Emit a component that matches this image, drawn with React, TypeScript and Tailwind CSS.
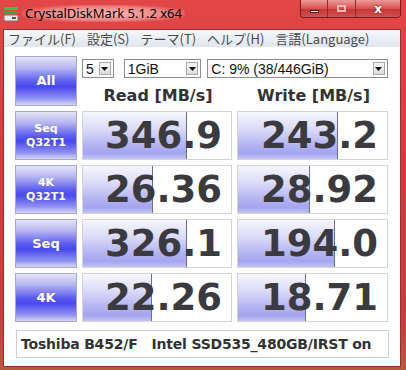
import React from "react";

type Row = { label: string[]; read: string; write: string; rw: number; ww: number };

const rows: Row[] = [
  { label: ["Seq", "Q32T1"], read: "346.9", write: "243.2", rw: 104, ww: 100 },
  { label: ["4K", "Q32T1"], read: "26.36", write: "28.92", rw: 70, ww: 72 },
  { label: ["Seq"], read: "326.1", write: "194.0", rw: 104, ww: 97 },
  { label: ["4K"], read: "22.26", write: "18.71", rw: 69, ww: 68 },
];

const menu = ["ファイル(F)", "設定(S)", "テーマ(T)", "ヘルプ(H)", "言語(Language)"];

const btnGrad =
  "bg-[linear-gradient(to_bottom,#e4e4f6_0%,#b8b8f2_22%,#5e5ef0_50%,#4848ee_62%,#8e8ef2_86%,#d6d6f6_100%)]";

function SideButton({ label, tall }: { label: string[]; tall?: boolean }) {
  const two = label.length > 1;
  return (
    <div
      className={`flex flex-col items-center justify-center border border-[#a8a8cc] ${btnGrad} font-['DejaVu_Sans',sans-serif] font-bold text-white ${
        tall ? "h-[50px]" : "h-[49px]"
      } ${two ? "text-[11px] leading-[14px]" : "text-[13px]"}`}
    >
      {label.map((l) => (
        <span key={l}>{l}</span>
      ))}
    </div>
  );
}

function Meter({ value, bar }: { value: string; bar: number }) {
  return (
    <div className="relative flex h-[49px] items-center justify-end overflow-hidden border border-[#d4d4d4] bg-white pr-[9px]">
      <div
        className="absolute inset-y-0 left-0 border-r border-[#6c6c98] bg-[linear-gradient(to_bottom,#f6f6fd_0%,#dcdcf8_35%,#b4b4f3_70%,#a4a4f0_88%,#c4c4f5_100%)]"
        style={{ width: bar }}
      />
      <span className="relative font-['DejaVu_Sans',sans-serif] text-[37px] font-bold leading-none text-[#3b3b3f]">
        {value}
      </span>
    </div>
  );
}

function Combo({ text, w }: { text: string; w: string }) {
  return (
    <div className={`flex h-[19px] items-center justify-between border border-[#8e8e8e] bg-white pl-[3px] pr-[2px] ${w}`}>
      <span className="font-['Liberation_Sans',sans-serif] text-[14px] leading-none text-[#111]">{text}</span>
      <span className="flex h-[13px] w-[12px] items-center justify-center border border-[#a8a8a8] bg-[linear-gradient(to_bottom,#f6f6f6,#dcdcdc)]">
        <svg width="7" height="4" viewBox="0 0 7 4">
          <path d="M0 0h7L3.5 4z" fill="#111" />
        </svg>
      </span>
    </div>
  );
}

function AppIcon() {
  return (
    <svg width="16" height="16" viewBox="0 0 16 16">
      <rect x="1" y="1" width="14" height="3" fill="#3fbf4a" />
      <rect x="1" y="5" width="14" height="3" fill="#2fa83c" />
      <rect x="1" y="9" width="14" height="6" rx="1" fill="#e8e8e8" stroke="#7a7a7a" strokeWidth="1" />
      <rect x="9" y="11" width="4" height="2" fill="#555" />
    </svg>
  );
}

export default function App() {
  return (
    <div className="flex h-[370px] w-[406px] flex-col bg-[linear-gradient(to_bottom,#e24646_0%,#d63c3c_40%,#cc3a3a_85%,#b45a3e_100%)] pb-[3px] pl-[3px] pr-[5px]">
      {/* title bar */}
      <div className="flex h-[29px] items-start">
        <div className="mt-[5px] flex items-center">
          <AppIcon />
          <span className="ml-[3px] rounded-full bg-[radial-gradient(ellipse_at_center,rgba(255,225,225,0.75)_0%,rgba(255,210,210,0.45)_55%,transparent_80%)] px-[3px] font-['Noto_Sans',sans-serif] text-[13px] leading-[17px] text-black">
            CrystalDiskMark 5.1.2 x64
          </span>
        </div>
        <div className="ml-auto flex h-[18px] overflow-hidden rounded-b-[4px] border border-t-0 border-[#7e1c1c] shadow-[inset_0_1px_0_rgba(255,255,255,0.4)]">
          <div className="flex w-[27px] items-end justify-center border-r border-[#8e2a2a] bg-[linear-gradient(to_bottom,#ee9a9a,#d85252_50%,#c43434_51%,#d05050)] pb-[4px]">
            <div className="h-[3px] w-[9px] border border-[#5a1010] bg-white" />
          </div>
          <div className="flex w-[28px] items-center justify-center border-r border-[#8e2a2a] bg-[linear-gradient(to_bottom,#ee9a9a,#d85252_50%,#c43434_51%,#d05050)]">
            <div className="h-[7px] w-[9px] border-2 border-[#f2b4b4]" />
          </div>
          <div className="flex w-[44px] items-center justify-center bg-[linear-gradient(to_bottom,#ee9a9a,#d85252_50%,#c43434_51%,#d05050)]">
            <span className="font-['DejaVu_Sans',sans-serif] text-[12px] font-bold leading-none text-white [text-shadow:0_0_2px_#5a1010]">
              x
            </span>
          </div>
        </div>
      </div>

      {/* client */}
      <div className="flex flex-1 flex-col border border-[#9a3030] bg-white">
        <div className="flex h-[17px] items-center gap-[11px] bg-[linear-gradient(to_bottom,#f6f8fb,#dfe6ef)] pl-[4px] font-['Noto_Sans_CJK_JP',sans-serif] text-[13px] leading-none text-[#4a4a4a]">
          {menu.map((m) => (
            <span key={m}>{m}</span>
          ))}
        </div>

        <div className="grid grid-cols-[62px_150px_151px] gap-[5px] pl-[11px] pt-[9px]">
          <SideButton label={["All"]} tall />
          <div className="col-span-2 flex flex-col">
            <div className="mt-[3px] flex">
              <Combo text="5" w="w-[32px]" />
              <Combo text="1GiB" w="ml-[10px] w-[78px]" />
              <Combo text="C: 9% (38/446GiB)" w="ml-[6px] w-[182px]" />
            </div>
            <div className="mt-auto grid grid-cols-[150px_151px] gap-[5px] pl-[1px] font-['DejaVu_Sans',sans-serif] text-[16px] font-bold leading-[20px] text-[#333]">
              <div className="text-center">Read [MB/s]</div>
              <div className="text-center">Write [MB/s]</div>
            </div>
          </div>
          {rows.map((r) => (
            <React.Fragment key={r.read}>
              <SideButton label={r.label} />
              <Meter value={r.read} bar={r.rw} />
              <Meter value={r.write} bar={r.ww} />
            </React.Fragment>
          ))}
        </div>

        <div className="ml-[12px] mt-[8px] flex h-[28px] w-[373px] items-center border border-[#cfcfcf] pl-[4px] font-['DejaVu_Sans',sans-serif] text-[14px] font-bold tracking-[-0.2px] whitespace-pre text-[#333]">
          {"Toshiba B452/F   Intel SSD535_480GB/IRST on"}
        </div>
      </div>
    </div>
  );
}
